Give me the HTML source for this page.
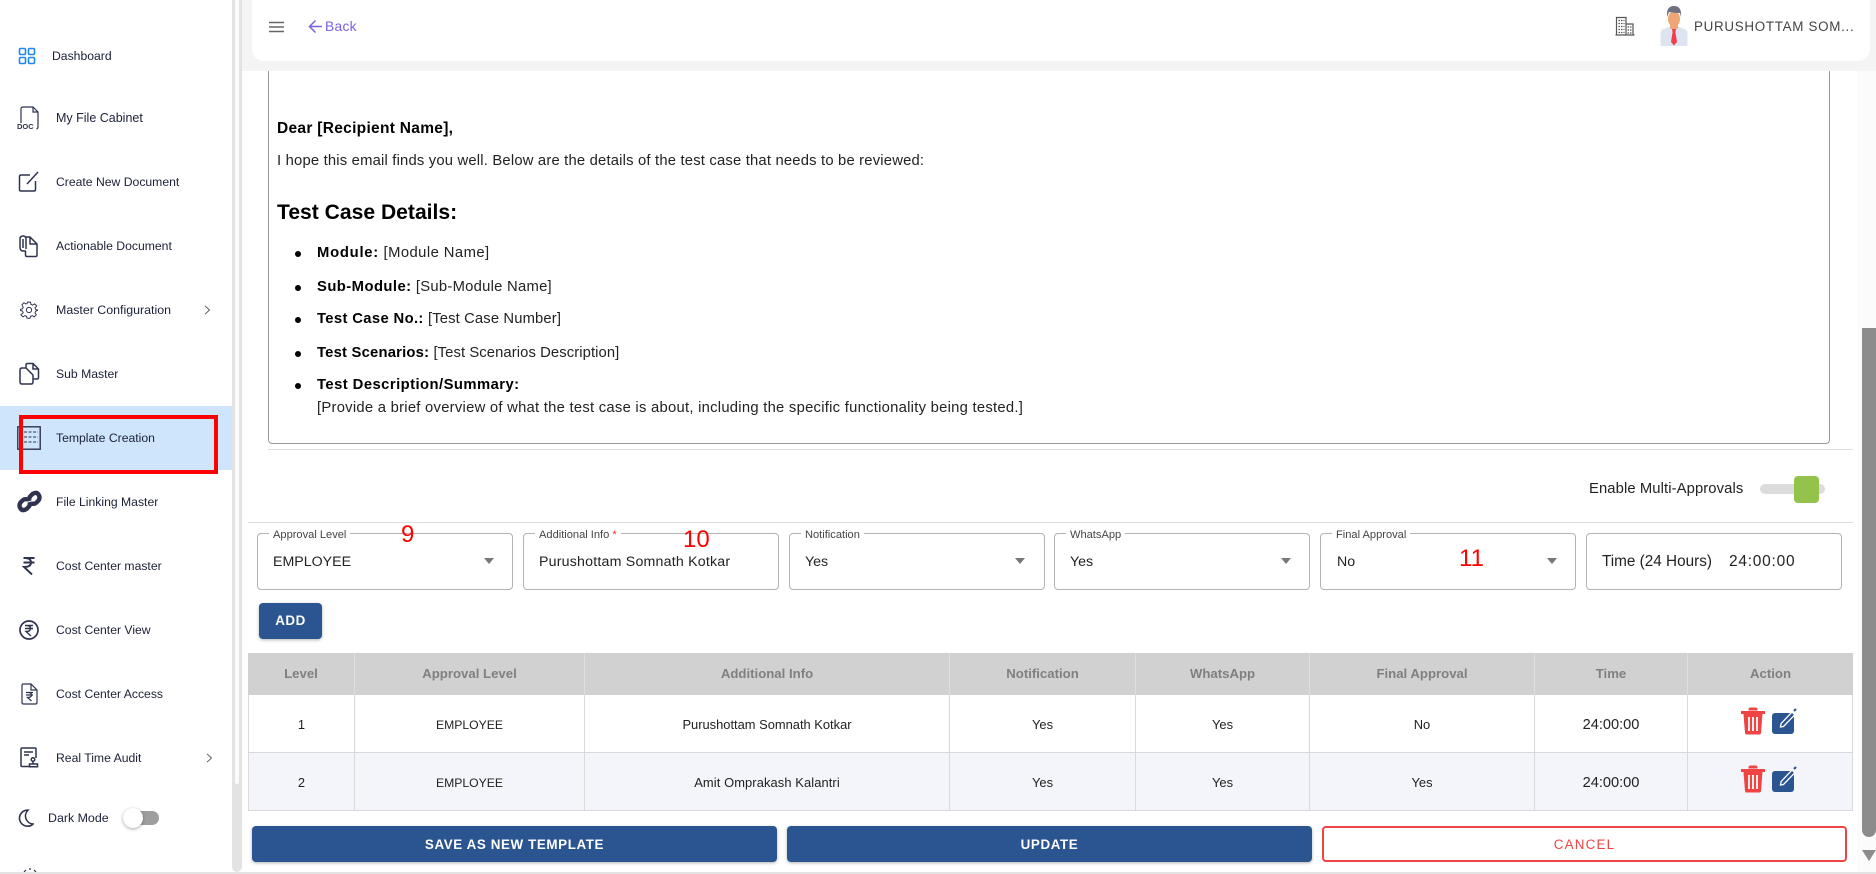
<!DOCTYPE html>
<html lang="en">
<head>
<meta charset="utf-8">
<title>Template Creation</title>
<style>
html,body{margin:0;padding:0;width:1876px;height:874px;overflow:hidden;background:#fff;font-family:"Liberation Sans",sans-serif;}
.a{position:absolute;}
.t{position:absolute;white-space:nowrap;line-height:20px;}
.nav{font-size:12.2px;color:#1b2036;}
.ic{position:absolute;fill:none;stroke:#2f3350;stroke-width:1.5;}
.doc{font-size:14.8px;letter-spacing:.26px;color:#222;}
.doc b{color:#000;letter-spacing:.45px;}
.li{position:absolute;width:6px;height:6px;border-radius:50%;background:#000;left:294.500px;}
.f{position:absolute;top:533px;height:55px;width:254px;border:1px solid #b3b3b3;border-radius:4px;background:#fff;}
.lab{position:absolute;top:528px;font-size:11.1px;line-height:14px;color:#444;background:#fff;padding:0 4px;white-space:nowrap;}
.val{position:absolute;top:552px;font-size:14.2px;line-height:20px;color:#222;white-space:nowrap;}
.arr{position:absolute;top:558px;width:0;height:0;border-left:5.500px solid transparent;border-right:5.500px solid transparent;border-top:6px solid #777;}
.th{position:absolute;top:653px;height:42px;line-height:42px;text-align:center;font-size:13.2px;font-weight:bold;color:#808080;background:#d1d1d1;border-right:1px solid #e0e0e0;box-sizing:border-box;}
.td{position:absolute;text-align:center;font-size:12.9px;color:#222;border-right:1px solid #d9d9d9;border-bottom:1px solid #d9d9d9;box-sizing:border-box;}
.emp{font-size:12.2px;}
.tm{font-size:14.6px;}
.r1{top:695px;height:58px;line-height:60px;background:#fff;}
.r2{top:753px;height:58px;line-height:60px;background:#f4f5fa;}
.btn{position:absolute;top:826px;height:36px;line-height:37px;border-radius:4px;text-align:center;font-size:13.4px;letter-spacing:.6px;font-weight:bold;color:#fff;background:#2b5591;box-shadow:0 1px 3px rgba(0,0,0,.3);}
.red{position:absolute;color:#f00;font-size:24px;line-height:28px;}
</style>
</head>
<body>
<!-- main background -->
<div class="a" style="left:242px;top:0;width:1634px;height:71px;background:#f4f4f4"></div>
<div class="a" style="left:252px;top:0;width:1618px;height:61px;background:#fff;border-radius:0 0 12px 12px"></div>

<!-- sidebar -->
<div class="a" style="left:0;top:0;width:232px;height:872px;background:#fff"></div>
<div class="a" style="left:232px;top:0;width:10px;height:872px;background:#e3e3e3;border-radius:0 0 5px 5px"></div>
<div class="a" style="left:235px;top:0;width:4px;height:784px;background:#fafafa;border-radius:0 0 2px 2px"></div>
<div class="a" style="left:0;top:406px;width:232px;height:64px;background:#cfe5fb"></div>

<svg class="ic" style="left:18px;top:47px;stroke:#1e88f0;stroke-width:1.6" width="18" height="18" viewBox="0 0 18 18"><rect x="1.5" y="1.5" width="6" height="6" rx="1.2"/><rect x="10.5" y="1.5" width="6" height="6" rx="1.2"/><rect x="1.5" y="10.5" width="6" height="6" rx="1.2"/><rect x="10.5" y="10.5" width="6" height="6" rx="1.2"/></svg>
<div class="t nav" style="left:52px;top:46px">Dashboard</div>

<svg class="ic" style="left:16px;top:105px;stroke-width:1.2" width="24" height="26" viewBox="0 0 24 26"><path d="M5 18V4q0-2 2-2h10l5 5v15q0 1.500-1.500 2M17 2v5h5"/></svg>
<div class="t" style="left:17px;top:120px;font-size:7.5px;font-weight:bold;color:#2f3350;line-height:14px">DOC</div>
<div class="t nav" style="left:56px;top:108px;font-size:12.500px">My File Cabinet</div>

<svg class="ic" style="left:18px;top:171px" width="22" height="22" viewBox="0 0 22 22"><path d="M12 4H3q-1.500 0-1.500 1.500v13Q1.500 20 3 20h13q1.500 0 1.500-1.500V10M9 13l11-12"/></svg>
<div class="t nav" style="left:56px;top:172px">Create New Document</div>

<svg class="ic" style="left:18px;top:234px" width="22" height="24" viewBox="0 0 22 24"><path d="M8 17H5Q2 17 2 13V5q0-3 3-3t3 3v10M5 5v9M8 3h4l7 7v11q0 1.500-1.500 1.500H9Q7.500 22.500 7.500 21v-4M12 3v7h7"/></svg>
<div class="t nav" style="left:56px;top:236px">Actionable Document</div>

<svg class="ic" style="left:20px;top:301px;stroke-width:1.3" width="18" height="18" viewBox="0 0 24 24"><circle cx="12" cy="12" r="3.5"/><path d="M10 1.500h4l.6 3 2.300 1 2.600-1.700 2.800 2.800L20 9.200l1 2.300 2.500.5v0.500l-2.500 1-1 2.300 1.700 2.600-2.800 2.800-2.600-1.700-2.300 1-.6 2.500h-4l-.6-2.500-2.300-1-2.600 1.700-2.800-2.800L4.300 15.800l-1-2.300-2.800-1V11l2.800-.5 1-2.300L2.500 5.100l2.800-2.800L7.900 4l1.500-.6z"/></svg>
<div class="t nav" style="left:56px;top:300px;font-size:12.400px">Master Configuration</div>
<svg class="ic" style="left:204px;top:305px;stroke:#555;stroke-width:.9" width="7" height="10" viewBox="0 0 7 10"><path d="M1 .8l4.500 4.200L1 9.200"/></svg>

<svg class="ic" style="left:18px;top:362px" width="22" height="24" viewBox="0 0 22 24"><path d="M8 6H4Q2 6 2 8v12q0 2 2 2h9q2 0 2-2v-3M8 6V3q0-1.500 1.500-1.500H15l5.500 5.500v8.500q0 1.500-1.500 1.500h-4M15 1.500V7h5.500M8 6l7 7v4"/></svg>
<div class="t nav" style="left:56px;top:364px">Sub Master</div>

<svg class="ic" style="left:17px;top:426px;stroke-width:1.4" width="24" height="24" viewBox="0 0 24 24"><rect x="0.800" y="0.800" width="22.400" height="22.400"/><path d="M7 6h14M7 11h14M7 16h14" stroke-dasharray="3 1.500" stroke-width="1.100"/></svg>
<div class="t nav" style="left:56px;top:428px">Template Creation</div>
<!-- annotation rectangle -->
<div class="a" style="left:19px;top:415px;width:199px;height:59px;box-sizing:border-box;border:4px solid #f00"></div>

<svg class="ic" style="left:17px;top:489px;stroke-width:4.4" width="25" height="25" viewBox="0 0 25 25"><path d="M10.500 10.500q-3-1-5 1l-2 2q-2 3 0 6t6 .5l2-2q2-2 1-5"/><path d="M14.500 14.500q3 1 5-1l2-2q2-3 0-6t-6-.5l-2 2q-2 2-1 5"/></svg>
<div class="t nav" style="left:56px;top:492px">File Linking Master</div>

<svg class="ic" style="left:22px;top:556px;stroke-width:1.9" width="14" height="20" viewBox="0 0 14 20"><path d="M1.500 2h11M1.500 6.500h11M3 2q6 0 6 4.500T2 11l8 7.500"/></svg>
<div class="t nav" style="left:56px;top:556px">Cost Center master</div>

<svg class="ic" style="left:18px;top:619px;stroke-width:1.700" width="22" height="22" viewBox="0 0 22 22"><circle cx="11" cy="11" r="9"/><path d="M7 6.500h8M7 9.500h8M8.500 6.500q4 0 4 3t-4.500 3l5 4.500" stroke-width="1.400"/></svg>
<div class="t nav" style="left:56px;top:620px">Cost Center View</div>

<svg class="ic" style="left:21px;top:683px" width="17" height="22" viewBox="0 0 17 22"><path d="M10 1H2.500Q1 1 1 2.500v17Q1 21 2.500 21h12q1.500 0 1.500-1.500V7zM10 1v6h6M5 9.500h7M5 12h7M7 9.500q3.500 0 3.500 2.500T6.500 14.500l4 3.500" stroke-width="1.200"/></svg>
<div class="t nav" style="left:56px;top:684px">Cost Center Access</div>

<svg class="ic" style="left:20px;top:747px" width="19" height="21" viewBox="0 0 19 21"><path d="M10 19.500H2Q1 19.500 1 18.500V2Q1 1 2 1h13q1 0 1 1v9M4 5h9M4 8h5"/><circle cx="13" cy="12.500" r="1.800"/><path d="M13 14.500v2M9.500 17h8v2.800h-8z"/></svg>
<div class="t nav" style="left:56px;top:748px">Real Time Audit</div>
<svg class="ic" style="left:206px;top:753px;stroke:#555;stroke-width:.9" width="7" height="10" viewBox="0 0 7 10"><path d="M1 .8l4.500 4.200L1 9.200"/></svg>

<svg class="ic" style="left:17px;top:809px;stroke-width:1.600" width="17" height="18" viewBox="0 0 17 18"><path d="M11 1.200A8 8 0 1 0 16 15 8 8 0 0 1 11 1.200z"/></svg>
<div class="t nav" style="left:48px;top:808px;font-size:12.400px">Dark Mode</div>
<div class="a" style="left:132px;top:811px;width:27px;height:14px;background:#9e9e9e;border-radius:7px"></div>
<div class="a" style="left:123px;top:808px;width:20px;height:20px;background:#fff;border-radius:50%;box-shadow:0 1px 3px rgba(0,0,0,.35)"></div>
<svg class="ic" style="left:22px;top:868px;stroke-width:1.200" width="16" height="4" viewBox="0 0 16 4"><path d="M2 4l2-2M7 1h2M12 2l2 2"/></svg>

<!-- header -->
<svg class="a" style="left:269px;top:21px" width="16" height="12" viewBox="0 0 16 12"><path d="M0 1.500h15M0 6h15M0 10.500h15" stroke="#666" stroke-width="1.400" fill="none"/></svg>
<svg class="a" style="left:308px;top:19px" width="15" height="15" viewBox="0 0 15 15"><path d="M14 7.500H2M7.500 1.500l-6 6 6 6" stroke="#7b61e8" stroke-width="1.500" fill="none"/></svg>
<div class="t" style="left:325px;top:17px;font-size:13.800px;letter-spacing:.3px;color:#7b61e8">Back</div>
<svg class="a" style="left:1615px;top:16px" width="20" height="20" viewBox="0 0 20 20" fill="none" stroke="#555" stroke-width="1.200"><path d="M1.500 19V1.500h9.500V19zM11 8h7v11h-7M.500 19h19"/><path d="M3.500 4.500h6M3.500 7.500h6M3.500 10.500h6M3.500 13.500h6M3.500 16.500h6M12.500 11h4M12.500 14h4M12.500 17h4" stroke-dasharray="1.500 1"/></svg>
<svg class="a" style="left:1660px;top:5px" width="28" height="41" viewBox="0 0 28 41">
<path d="M0.500 41V28q0-3 3-4l6.500-2.500h8l6.500 2.500q3 1 3 4v13z" fill="#dfe4f2"/>
<path d="M10 18h8v5q-4 4-8 0z" fill="#efa677"/>
<ellipse cx="14" cy="14" rx="6" ry="8" fill="#efa677"/>
<path d="M7 12q-1-11 7-11t7 11l-1-4q-6 0-11-1z" fill="#6d7180"/>
<path d="M12 24h4l-.6 3 1.600 10-3 3.500-3-3.500 1.600-10z" fill="#ef3f4a"/>
</svg>
<div class="t" style="left:1694px;top:17px;font-size:13.400px;letter-spacing:.7px;color:#444">PURUSHOTTAM SOM...</div>

<!-- document box -->
<div class="a" style="left:268px;top:71px;width:1562px;height:373px;box-sizing:border-box;border:1px solid #999;border-top:none;border-radius:0 0 4px 4px;"></div>
<div class="a" style="left:268px;top:449px;width:1585px;height:1px;background:#dedede"></div>

<div class="t doc" style="left:277px;top:119px;font-size:15.500px"><b style="letter-spacing:.3px">Dear [Recipient Name],</b></div>
<div class="t doc" style="left:277px;top:151px;letter-spacing:.19px">I hope this email finds you well. Below are the details of the test case that needs to be reviewed:</div>
<div class="t" style="left:277px;top:203px;font-size:21.100px;font-weight:bold;color:#000">Test Case Details:</div>
<div class="li" style="top:251px"></div>
<div class="t doc" style="left:317px;top:243px;letter-spacing:.44px"><b style="letter-spacing:.75px">Module:</b> [Module Name]</div>
<div class="li" style="top:285px"></div>
<div class="t doc" style="left:317px;top:277px"><b>Sub-Module:</b> [Sub-Module Name]</div>
<div class="li" style="top:317px"></div>
<div class="t doc" style="left:317px;top:309px;letter-spacing:.13px"><b style="letter-spacing:.36px">Test Case No.:</b> [Test Case Number]</div>
<div class="li" style="top:351px"></div>
<div class="t doc" style="left:317px;top:343px;letter-spacing:.09px"><b style="letter-spacing:.21px">Test Scenarios:</b> [Test Scenarios Description]</div>
<div class="li" style="top:383px"></div>
<div class="t doc" style="left:317px;top:375px"><b>Test Description/Summary:</b></div>
<div class="t doc" style="left:317px;top:398px">[Provide a brief overview of what the test case is about, including the specific functionality being tested.]</div>

<!-- toggle -->
<div class="t doc" style="left:1589px;top:479px;letter-spacing:.1px">Enable Multi-Approvals</div>
<div class="a" style="left:1760px;top:484px;width:65px;height:10px;background:#dcdcdc;border-radius:5px"></div>
<div class="a" style="left:1794px;top:476px;width:25px;height:27px;background:#94c34c;border-radius:4px"></div>

<div class="a" style="left:248px;top:522px;width:1605px;height:1px;background:#dedede"></div>

<!-- fields -->
<div class="f" style="left:257px"></div>
<div class="lab" style="left:269px">Approval Level</div>
<div class="val" style="left:273px">EMPLOYEE</div>
<div class="arr" style="left:484px"></div>

<div class="f" style="left:523px"></div>
<div class="lab" style="left:535px">Additional Info <span style="color:#e33">*</span></div>
<div class="val" style="left:539px;letter-spacing:.2px">Purushottam Somnath Kotkar</div>

<div class="f" style="left:789px"></div>
<div class="lab" style="left:801px">Notification</div>
<div class="val" style="left:805px">Yes</div>
<div class="arr" style="left:1015px"></div>

<div class="f" style="left:1054px"></div>
<div class="lab" style="left:1066px">WhatsApp</div>
<div class="val" style="left:1070px">Yes</div>
<div class="arr" style="left:1281px"></div>

<div class="f" style="left:1320px"></div>
<div class="lab" style="left:1332px">Final Approval</div>
<div class="val" style="left:1337px">No</div>
<div class="arr" style="left:1547px"></div>

<div class="f" style="left:1586px"></div>
<div class="val" style="left:1602px;font-size:15.300px">Time (24 Hours)</div>
<div class="val" style="left:1729px;font-size:15.500px;letter-spacing:.75px">24:00:00</div>

<div class="red" style="left:401px;top:521px">9</div>
<div class="red" style="left:683px;top:526px">10</div>
<div class="red" style="left:1459px;top:545px">11</div>

<div class="btn" style="left:259px;top:603px;width:63px;height:36px;line-height:36px;letter-spacing:.5px">ADD</div>

<!-- table -->
<div class="th" style="left:248px;width:107px">Level</div>
<div class="th" style="left:355px;width:230px">Approval Level</div>
<div class="th" style="left:585px;width:365px">Additional Info</div>
<div class="th" style="left:950px;width:186px">Notification</div>
<div class="th" style="left:1136px;width:174px">WhatsApp</div>
<div class="th" style="left:1310px;width:225px">Final Approval</div>
<div class="th" style="left:1535px;width:153px">Time</div>
<div class="th" style="left:1688px;width:165px;border-right:none">Action</div>

<div class="td r1" style="left:248px;width:107px;border-left:1px solid #d9d9d9">1</div>
<div class="td r1 emp" style="left:355px;width:230px">EMPLOYEE</div>
<div class="td r1" style="left:585px;width:365px">Purushottam Somnath Kotkar</div>
<div class="td r1" style="left:950px;width:186px">Yes</div>
<div class="td r1" style="left:1136px;width:174px">Yes</div>
<div class="td r1" style="left:1310px;width:225px">No</div>
<div class="td r1 tm" style="left:1535px;width:153px">24:00:00</div>
<div class="td r1" style="left:1688px;width:165px"></div>

<div class="td r2" style="left:248px;width:107px;border-left:1px solid #d9d9d9">2</div>
<div class="td r2 emp" style="left:355px;width:230px">EMPLOYEE</div>
<div class="td r2" style="left:585px;width:365px;letter-spacing:.1px">Amit Omprakash Kalantri</div>
<div class="td r2" style="left:950px;width:186px">Yes</div>
<div class="td r2" style="left:1136px;width:174px">Yes</div>
<div class="td r2" style="left:1310px;width:225px">Yes</div>
<div class="td r2 tm" style="left:1535px;width:153px">24:00:00</div>
<div class="td r2" style="left:1688px;width:165px"></div>

<svg class="a" style="left:1741px;top:707px" width="24" height="28" viewBox="0 0 24 28"><path d="M8 3.500V2.500Q8 1 9.500 1h5Q16 1 16 2.500v1M0 4.500h24v2H0z" fill="#ef4444" stroke="#ef4444" stroke-width="1"/><path d="M2.500 7h19l-1.500 19q-.2 1.500-1.700 1.500H5.700Q4.200 27.500 4 26z" fill="#ef4444"/><path d="M8 10v14M12 10v14M16 10v14" stroke="#fff" stroke-width="1.800" fill="none"/></svg>
<svg class="a" style="left:1772px;top:707px" width="26" height="28" viewBox="0 0 26 28"><rect x="0" y="6" width="22" height="21" rx="3" fill="#2b5591"/><path d="M8.500 20l.6-3.500L20 5l2.800 2.800L11.500 19.500z" fill="#2b5591" stroke="#fff" stroke-width="1.300"/><path d="M22 4l2-2" stroke="#2b5591" stroke-width="2.200"/></svg>
<svg class="a" style="left:1741px;top:765px" width="24" height="28" viewBox="0 0 24 28"><path d="M8 3.500V2.500Q8 1 9.500 1h5Q16 1 16 2.500v1M0 4.500h24v2H0z" fill="#ef4444" stroke="#ef4444" stroke-width="1"/><path d="M2.500 7h19l-1.500 19q-.2 1.500-1.700 1.500H5.700Q4.200 27.500 4 26z" fill="#ef4444"/><path d="M8 10v14M12 10v14M16 10v14" stroke="#fff" stroke-width="1.800" fill="none"/></svg>
<svg class="a" style="left:1772px;top:765px" width="26" height="28" viewBox="0 0 26 28"><rect x="0" y="6" width="22" height="21" rx="3" fill="#2b5591"/><path d="M8.500 20l.6-3.500L20 5l2.800 2.800L11.500 19.500z" fill="#2b5591" stroke="#fff" stroke-width="1.300"/><path d="M22 4l2-2" stroke="#2b5591" stroke-width="2.200"/></svg>

<!-- buttons -->
<div class="btn" style="left:252px;width:525px">SAVE AS NEW TEMPLATE</div>
<div class="btn" style="left:787px;width:525px">UPDATE</div>
<div class="btn" style="left:1322px;width:525px;box-sizing:border-box;height:36px;line-height:33px;letter-spacing:1.2px;background:#fff;color:#ef4444;border:2px solid #ef4444;box-shadow:none;font-weight:normal">CANCEL</div>

<!-- right scrollbar -->
<div class="a" style="left:1857px;top:71px;width:19px;height:801px;background:#fbfbfb"></div>
<div class="a" style="left:1862px;top:328px;width:14px;height:509px;background:#8c8c8c;border-radius:0 0 7px 7px"></div>
<div class="a" style="left:1862px;top:850px;width:0;height:0;border-left:7px solid transparent;border-right:7px solid transparent;border-top:11px solid #8c8c8c"></div>

<!-- bottom edge -->
<div class="a" style="left:0;top:872px;width:1876px;height:2px;background:#e3e3e3"></div>
</body>
</html>
